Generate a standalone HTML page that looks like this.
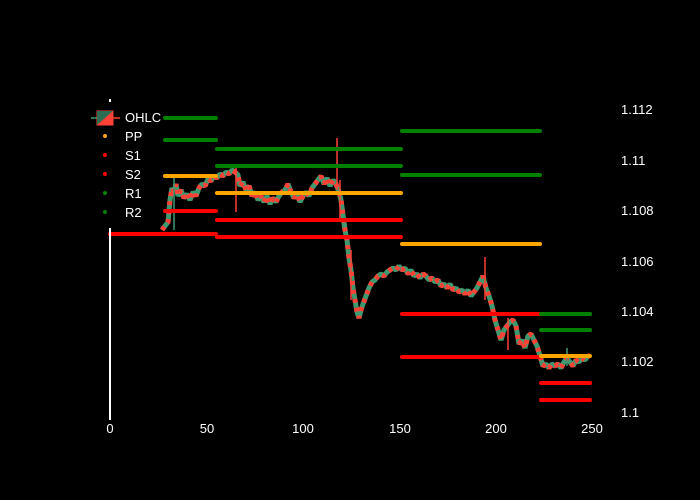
<!DOCTYPE html>
<html><head><meta charset="utf-8"><style>
html,body{margin:0;padding:0;background:#000;}
svg{display:block;font-family:"Liberation Sans",sans-serif;}
</style></head><body>
<svg width="700" height="500" viewBox="0 0 700 500" xmlns="http://www.w3.org/2000/svg">
<rect width="700" height="500" fill="#000"/>
<g fill="none" stroke-linejoin="bevel">
<polyline stroke="#3d9970" stroke-width="5" points="162,230 165,226 168,222 170,200 172,188 174,192 176,184 178,196 181,190 184,198 187,194 190,200 193,192 196,196 199,188 202,184 205,186 208,179 211,181 214,176 217,178 220,174 223,176 226,172 229,174 232,170 235,172 238,175 240,186 243,182 246,190 249,186 252,196 255,192 258,200 261,196 264,202 267,196 270,204 273,198 276,202 279,196 282,192 285,190 288,184 291,192 294,198 297,194 300,202 303,196 306,192 309,196 312,188 315,184 318,180 321,176 324,184 327,178 330,186 333,180 336,184 339,192 341,200 343,215 345,230 347,240 349,258 351,270 353,288 355,300 357,312 359,318 361,310 363,304 366,296 369,288 372,282 375,280 378,276 381,274 384,276 387,272 390,270 393,268 396,270 399,266 402,270 405,268 408,274 411,270 414,276 417,274 420,278 423,274 426,276 429,280 432,278 435,282 438,280 441,286 444,284 447,288 450,284 453,290 456,288 459,292 462,290 465,294 468,290 471,296 474,292 477,288 480,282 483,276 486,288 489,296 492,306 495,320 498,330 501,340 504,330 507,326 510,322 513,320 516,326 519,344 522,340 525,348 528,336 531,334 534,340 537,346 540,356 543,366 546,364 549,368 552,364 555,366 558,364 561,368 564,362 567,358 570,362 573,366 576,360 579,362 582,358 585,360 588,356 590,356"/>
<polyline stroke="#ff4136" stroke-width="5" stroke-dasharray="4 5" points="162,230 165,226 168,222 170,200 172,188 174,192 176,184 178,196 181,190 184,198 187,194 190,200 193,192 196,196 199,188 202,184 205,186 208,179 211,181 214,176 217,178 220,174 223,176 226,172 229,174 232,170 235,172 238,175 240,186 243,182 246,190 249,186 252,196 255,192 258,200 261,196 264,202 267,196 270,204 273,198 276,202 279,196 282,192 285,190 288,184 291,192 294,198 297,194 300,202 303,196 306,192 309,196 312,188 315,184 318,180 321,176 324,184 327,178 330,186 333,180 336,184 339,192 341,200 343,215 345,230 347,240 349,258 351,270 353,288 355,300 357,312 359,318 361,310 363,304 366,296 369,288 372,282 375,280 378,276 381,274 384,276 387,272 390,270 393,268 396,270 399,266 402,270 405,268 408,274 411,270 414,276 417,274 420,278 423,274 426,276 429,280 432,278 435,282 438,280 441,286 444,284 447,288 450,284 453,290 456,288 459,292 462,290 465,294 468,290 471,296 474,292 477,288 480,282 483,276 486,288 489,296 492,306 495,320 498,330 501,340 504,330 507,326 510,322 513,320 516,326 519,344 522,340 525,348 528,336 531,334 534,340 537,346 540,356 543,366 546,364 549,368 552,364 555,366 558,364 561,368 564,362 567,358 570,362 573,366 576,360 579,362 582,358 585,360 588,356 590,356"/>
</g>
<g stroke="#ff4136" stroke-width="1.5">
<line x1="337" x2="337" y1="138" y2="190"/>
<line x1="485" x2="485" y1="257" y2="300"/>
<line x1="236" x2="236" y1="166" y2="212"/>
<line x1="340" x2="340" y1="180" y2="220"/>
<line x1="351" x2="351" y1="250" y2="300"/>
<line x1="508" x2="508" y1="318" y2="350"/>
</g>
<g stroke="#3d9970" stroke-width="1.5">
<line x1="567" x2="567" y1="348" y2="366"/>
<line x1="174" x2="174" y1="178" y2="230"/>
</g>
<g stroke-width="4" stroke-linecap="round">
<line x1="165" x2="216" y1="118" y2="118" stroke="#008000"/>
<line x1="165" x2="216" y1="140" y2="140" stroke="#008000"/>
<line x1="165" x2="216" y1="176" y2="176" stroke="#ffa500"/>
<line x1="165" x2="216" y1="211" y2="211" stroke="#ff0000"/>
<line x1="110" x2="216" y1="234" y2="234" stroke="#ff0000"/>
<line x1="217" x2="401" y1="149" y2="149" stroke="#008000"/>
<line x1="217" x2="401" y1="166" y2="166" stroke="#008000"/>
<line x1="217" x2="401" y1="193" y2="193" stroke="#ffa500"/>
<line x1="217" x2="401" y1="220" y2="220" stroke="#ff0000"/>
<line x1="217" x2="401" y1="237" y2="237" stroke="#ff0000"/>
<line x1="402" x2="540" y1="131" y2="131" stroke="#008000"/>
<line x1="402" x2="540" y1="175" y2="175" stroke="#008000"/>
<line x1="402" x2="540" y1="244" y2="244" stroke="#ffa500"/>
<line x1="402" x2="540" y1="314" y2="314" stroke="#ff0000"/>
<line x1="402" x2="540" y1="357" y2="357" stroke="#ff0000"/>
<line x1="541" x2="590" y1="314" y2="314" stroke="#008000"/>
<line x1="541" x2="590" y1="330" y2="330" stroke="#008000"/>
<line x1="541" x2="590" y1="356" y2="356" stroke="#ffa500"/>
<line x1="541" x2="590" y1="383" y2="383" stroke="#ff0000"/>
<line x1="541" x2="590" y1="400" y2="400" stroke="#ff0000"/>
</g>
<line x1="110" x2="110" y1="228" y2="420" stroke="#fff" stroke-width="2"/>
<rect x="109" y="99" width="2" height="3" fill="#fff"/>
<g fill="#fff" font-size="13" text-anchor="middle">
<text x="110" y="433">0</text><text x="207" y="433">50</text><text x="303" y="433">100</text>
<text x="400" y="433">150</text><text x="496" y="433">200</text><text x="592" y="433">250</text>
</g>
<g fill="#fff" font-size="13">
<text x="621" y="114">1.112</text><text x="621" y="165">1.11</text><text x="621" y="215">1.108</text>
<text x="621" y="266">1.106</text><text x="621" y="316">1.104</text><text x="621" y="366">1.102</text>
<text x="621" y="417">1.1</text>
</g>
<g font-size="13" fill="#fff">
<line x1="91" x2="106" y1="118" y2="118" stroke="#3d9970" stroke-width="1.5"/>
<line x1="106" x2="120" y1="118" y2="118" stroke="#ff4136" stroke-width="1.5"/>
<rect x="97" y="111" width="16" height="14" fill="#ff4136" stroke="#ff4136"/>
<polygon points="97,111 113,111 97,125" fill="#2d6e52"/>
<text x="125" y="122">OHLC</text>
<circle cx="105" cy="136" r="2" fill="#ffa500"/><text x="125" y="141">PP</text>
<circle cx="105" cy="155" r="2" fill="#ff0000"/><text x="125" y="160">S1</text>
<circle cx="105" cy="174" r="2" fill="#ff0000"/><text x="125" y="179">S2</text>
<circle cx="105" cy="193" r="2" fill="#008000"/><text x="125" y="198">R1</text>
<circle cx="105" cy="212" r="2" fill="#008000"/><text x="125" y="217">R2</text>
</g>
</svg>
</body></html>
